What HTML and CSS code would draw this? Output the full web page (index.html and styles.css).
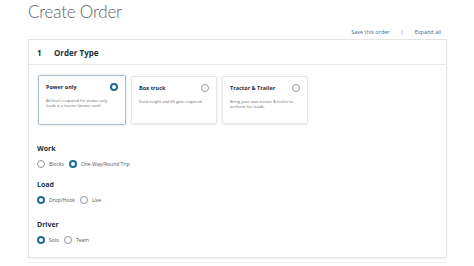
FILE: index.html
```html
<!DOCTYPE html>
<html lang="en">
<head>
    <meta charset="UTF-8">
    <title>Create Order</title>
    <link rel="stylesheet" href="styles.css">
</head>
<body>
<div class="page">
    <h1 class="title">Create Order</h1>
    <div class="actions">
        <a class="link">Save this order</a>
        <span class="sep">|</span>
        <a class="link">Expand all</a>
    </div>

    <div class="panel">
        <div class="panel-head">
            <span class="step">1</span>
            <span class="panel-title">Order Type</span>
        </div>
        <div class="panel-body">
            <div class="cards">
                <div class="card selected">
                    <div class="card-top">
                        <span class="card-title">Power only</span>
                        <span class="radio on"></span>
                    </div>
                    <p class="card-text">All that's required for power only loads is a tractor (power unit).</p>
                </div>
                <div class="card">
                    <div class="card-top">
                        <span class="card-title">Box truck</span>
                        <span class="radio"></span>
                    </div>
                    <p class="card-text">Dock height and lift gate required.</p>
                </div>
                <div class="card">
                    <div class="card-top">
                        <span class="card-title">Tractor &amp; Trailer</span>
                        <span class="radio"></span>
                    </div>
                    <p class="card-text">Bring your own tractor &amp; trailer to perform live loads.</p>
                </div>
            </div>

            <div class="group work">
                <div class="group-label">Work</div>
                <div class="options">
                    <span class="radio"></span><span class="opt">Blocks</span>
                    <span class="radio on"></span><span class="opt">One-Way/Round Trip</span>
                </div>
            </div>
            <div class="group load">
                <div class="group-label">Load</div>
                <div class="options">
                    <span class="radio on"></span><span class="opt">Drop/Hook</span>
                    <span class="radio"></span><span class="opt">Live</span>
                </div>
            </div>
            <div class="group driver">
                <div class="group-label">Driver</div>
                <div class="options">
                    <span class="radio on"></span><span class="opt">Solo</span>
                    <span class="radio"></span><span class="opt">Team</span>
                </div>
            </div>
        </div>
    </div>
    <div class="panel-next"></div>
</div>
</body>
</html>
```

FILE: styles.css
```css
body{
    margin: 0;
    background-color: white;
    font-family: "Open Sans", "Noto Sans", sans-serif;
    color: #232f3e;
}
.page{
    padding-left: 28px;
    width: 419px;
}
.title{
    margin: 0;
    padding-top: 1px;
    font-family: Lato, "Open Sans", sans-serif;
    font-size: 17px;
    letter-spacing: -0.2px;
    font-weight: 300;
    color: #5f5f5f;
    height: 24px;
}
.actions{
    display: flex;
    justify-content: flex-end;
    align-items: center;
    gap: 11px;
    font-size: 5.5px;
    height: 14px;
    padding-right: 6px;
}
.link{
    color: #3a6c8f;
}
.sep{
    color: #555;
}
.panel{
    border: 1px solid #e4e4e4;
    box-shadow: 0 1px 2px rgba(0,0,0,0.06);
    height: 219px;
    box-sizing: border-box;
}
.panel-head{
    height: 24px;
    border-bottom: 1px solid #e8e8e8;
    display: flex;
    align-items: center;
    font-size: 8px;
    font-weight: bold;
    padding-left: 8px;
}
.step{
    width: 17px;
}
.cards{
    display: flex;
    gap: 5px;
    padding: 10px 0 0 9px;
}
.card{
    width: 86px;
    height: 48px;
    box-sizing: border-box;
    border: 1px solid #e6e6e6;
    border-radius: 2px;
    box-shadow: 0 1px 3px rgba(0,0,0,0.08);
    padding: 6px 7px;
    margin-top: 1px;
}
.card.selected{
    width: 88px;
    height: 50px;
    margin-top: 0;
    border: 1px solid #a9bfcc;
    box-shadow: 0 0 2px rgba(0,70,110,0.25);
}
.card-top{
    display: flex;
    justify-content: space-between;
    align-items: center;
    height: 10px;
}
.card-title{
    font-size: 5.5px;
    font-weight: bold;
}
.card-text{
    margin: 6px 0 0;
    font-size: 4px;
    line-height: 5px;
    color: #666;
    width: 72px;
}
.radio{
    display: inline-block;
    width: 6px;
    height: 6px;
    border: 1px solid #999;
    border-radius: 50%;
    background: white;
}
.radio.on{
    width: 4px;
    height: 4px;
    border: 2px solid #1e6b97;
}
.group{
    padding-left: 8px;
}
.group-label{
    font-size: 7px;
    font-weight: bold;
    height: 15px;
    line-height: 10px;
}
.work .group-label{
    margin-top: 19px;
}
.load .group-label{
    margin-top: 11px;
}
.driver .group-label{
    margin-top: 15px;
}
.options{
    display: flex;
    align-items: center;
    font-size: 5px;
    color: #555;
    height: 10px;
}
.opt{
    margin: 0 5px 0 4px;
}
.panel-next{
    height: 4px;
    border-bottom: 1px solid #eee;
}
```
